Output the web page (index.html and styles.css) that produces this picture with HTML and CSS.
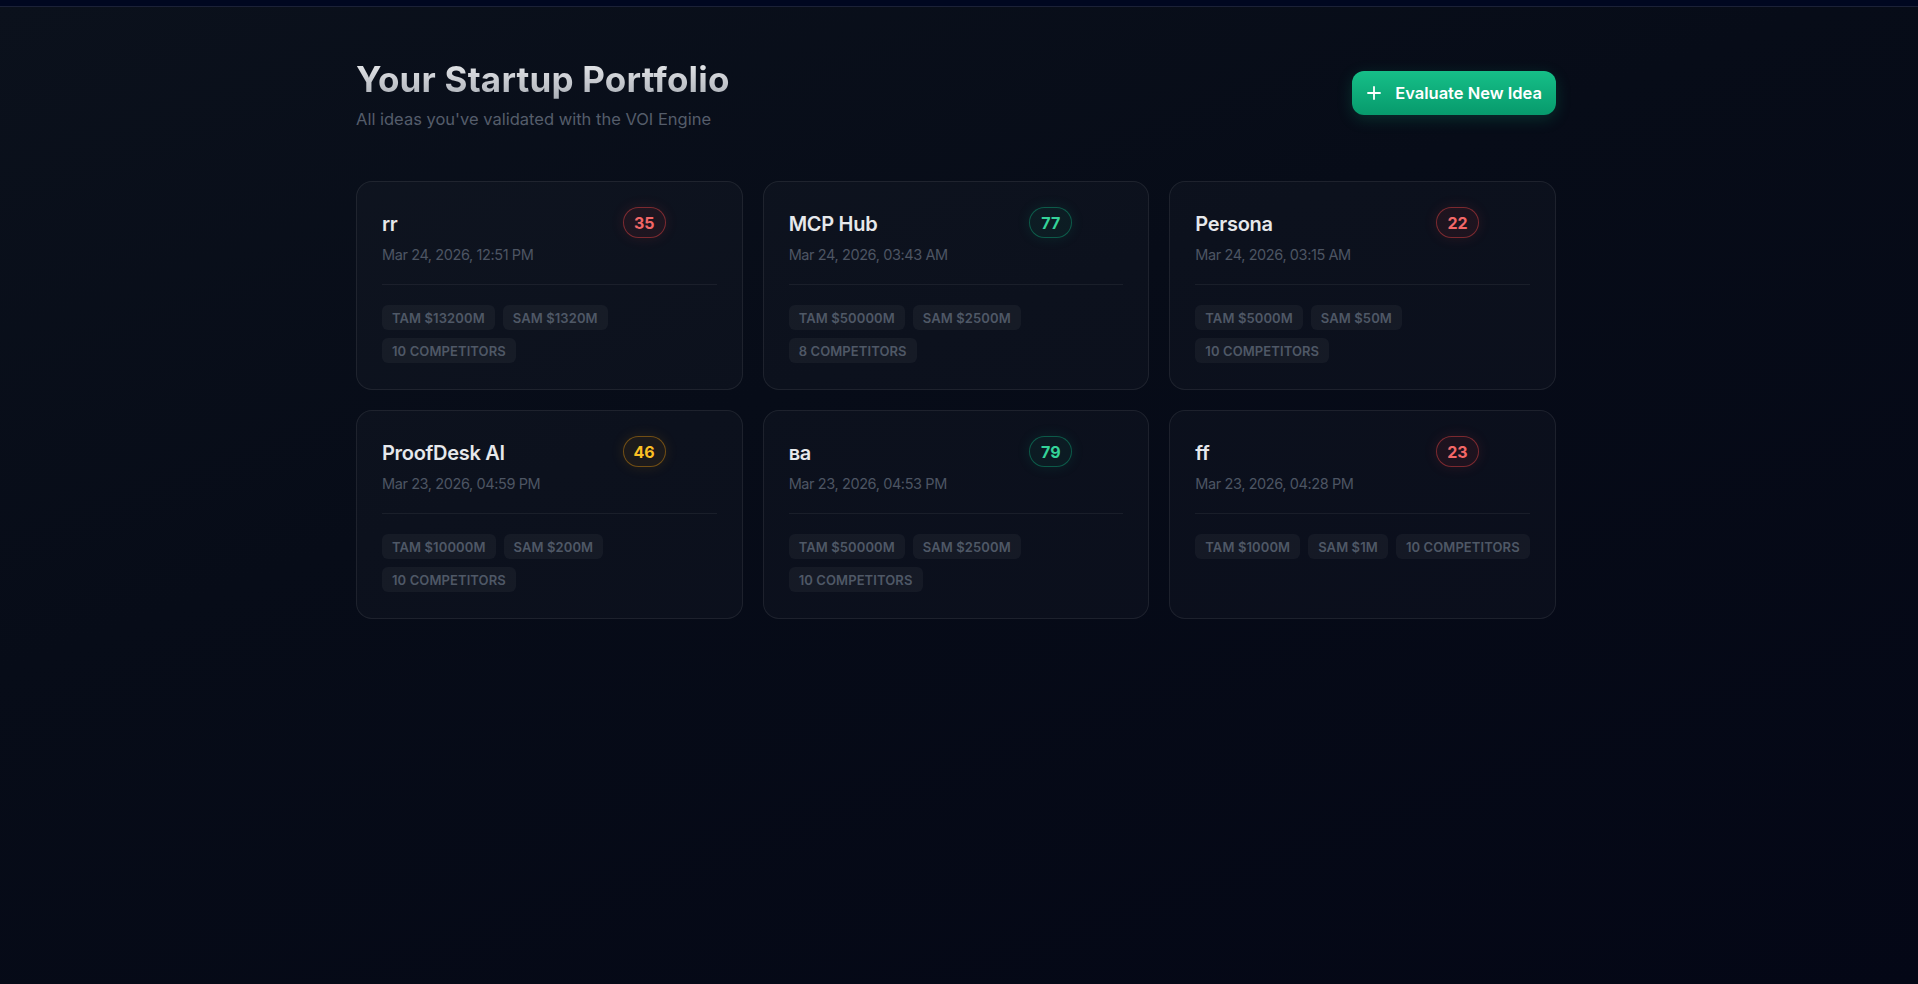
FILE: index.html
```html
<!DOCTYPE html>
<html lang="en">
<head>
    <meta charset="UTF-8">
    <meta name="viewport" content="width=device-width, initial-scale=1.0">
    <title>Portfolio</title>
    <link rel="stylesheet" href="styles.css">
</head>
<body>
    <div class="topbar"></div>
    <main class="page">
        <div class="container">
            <div class="page-header">
                <div>
                    <h1>Your Startup Portfolio</h1>
                    <p class="subtitle">All ideas you've validated with the VOI Engine</p>
                </div>
                <button class="new-button">
                    <svg width="14" height="14" viewBox="0 0 14 14" fill="none" stroke="currentColor" stroke-width="1.8" stroke-linecap="round"><path d="M7 1v12M1 7h12"/></svg>
                    Evaluate New Idea
                </button>
            </div>

            <div class="grid">
                <div class="card">
                    <div class="card-top">
                        <div>
                            <h3>rr</h3>
                            <p class="date">Mar 24, 2026, 12:51 PM</p>
                        </div>
                        <div class="card-actions">
                            <span class="score low">35</span>
                            <span class="hidden-action"></span>
                        </div>
                    </div>
                    <div class="divider"></div>
                    <div class="tags">
                        <span class="tag">TAM $13200M</span>
                        <span class="tag">SAM $1320M</span>
                        <span class="tag">10 Competitors</span>
                    </div>
                </div>

                <div class="card">
                    <div class="card-top">
                        <div>
                            <h3>MCP Hub</h3>
                            <p class="date">Mar 24, 2026, 03:43 AM</p>
                        </div>
                        <div class="card-actions">
                            <span class="score high">77</span>
                            <span class="hidden-action"></span>
                        </div>
                    </div>
                    <div class="divider"></div>
                    <div class="tags">
                        <span class="tag">TAM $50000M</span>
                        <span class="tag">SAM $2500M</span>
                        <span class="tag">8 Competitors</span>
                    </div>
                </div>

                <div class="card">
                    <div class="card-top">
                        <div>
                            <h3>Persona</h3>
                            <p class="date">Mar 24, 2026, 03:15 AM</p>
                        </div>
                        <div class="card-actions">
                            <span class="score low">22</span>
                            <span class="hidden-action"></span>
                        </div>
                    </div>
                    <div class="divider"></div>
                    <div class="tags">
                        <span class="tag">TAM $5000M</span>
                        <span class="tag">SAM $50M</span>
                        <span class="tag">10 Competitors</span>
                    </div>
                </div>

                <div class="card">
                    <div class="card-top">
                        <div>
                            <h3>ProofDesk AI</h3>
                            <p class="date">Mar 23, 2026, 04:59 PM</p>
                        </div>
                        <div class="card-actions">
                            <span class="score mid">46</span>
                            <span class="hidden-action"></span>
                        </div>
                    </div>
                    <div class="divider"></div>
                    <div class="tags">
                        <span class="tag">TAM $10000M</span>
                        <span class="tag">SAM $200M</span>
                        <span class="tag">10 Competitors</span>
                    </div>
                </div>

                <div class="card">
                    <div class="card-top">
                        <div>
                            <h3>ва</h3>
                            <p class="date">Mar 23, 2026, 04:53 PM</p>
                        </div>
                        <div class="card-actions">
                            <span class="score high">79</span>
                            <span class="hidden-action"></span>
                        </div>
                    </div>
                    <div class="divider"></div>
                    <div class="tags">
                        <span class="tag">TAM $50000M</span>
                        <span class="tag">SAM $2500M</span>
                        <span class="tag">10 Competitors</span>
                    </div>
                </div>

                <div class="card">
                    <div class="card-top">
                        <div>
                            <h3>ff</h3>
                            <p class="date">Mar 23, 2026, 04:28 PM</p>
                        </div>
                        <div class="card-actions">
                            <span class="score low">23</span>
                            <span class="hidden-action"></span>
                        </div>
                    </div>
                    <div class="divider"></div>
                    <div class="tags">
                        <span class="tag">TAM $1000M</span>
                        <span class="tag">SAM $1M</span>
                        <span class="tag">10 Competitors</span>
                    </div>
                </div>
            </div>
        </div>
    </main>
</body>
</html>
```

FILE: styles.css
```css
html, body {
    height: 100%;
}
body {
    margin: 0;
    font-family: 'Inter', 'Noto Sans', sans-serif;
    color: #e5e7eb;
    background: linear-gradient(160deg, #0b111c 0%, #070c18 40%, #040716 100%);
    display: flex;
    flex-direction: column;
    overflow: hidden;
}
.topbar {
    height: 6px;
    background-color: #000720;
    border-bottom: 1px solid #1b2137;
    flex-shrink: 0;
}
.page {
    flex: 1;
    padding: 48px 6px 0 0;
}
.container {
    max-width: 1200px;
    margin: 0 auto;
}
.page-header {
    display: flex;
    justify-content: space-between;
    align-items: center;
    margin-bottom: 50px;
}
h1 {
    margin: 0;
    font-size: 35px;
    line-height: 48px;
    font-weight: 700;
    letter-spacing: 0.2px;
    background: linear-gradient(180deg, #f1f2f4 0%, #a4a9b1 100%);
    -webkit-background-clip: text;
    background-clip: text;
    color: transparent;
}
.subtitle {
    margin: 4px 0 0;
    font-size: 16.5px;
    line-height: 24px;
    color: #555d6b;
}
.new-button {
    display: flex;
    align-items: center;
    gap: 14px;
    height: 44px;
    padding: 0 14px 0 15px;
    border: none;
    border-radius: 12px;
    background: linear-gradient(180deg, #16bf88 0%, #079a6c 100%);
    color: #fff;
    font-family: inherit;
    font-size: 16.5px;
    font-weight: 600;
    box-shadow: 0 4px 16px rgba(16, 185, 129, 0.2);
    cursor: pointer;
}
.grid {
    display: grid;
    grid-template-columns: repeat(3, 1fr);
    gap: 20px;
}
.card {
    background-color: rgba(255, 255, 255, 0.022);
    border: 1px solid rgba(255, 255, 255, 0.075);
    border-radius: 16px;
    padding: 25px 25px 24px 25px;
    height: 209px;
    box-sizing: border-box;
}
.card-top {
    display: flex;
    justify-content: space-between;
    align-items: flex-start;
}
.card h3 {
    margin: 2px 0 0;
    font-size: 20px;
    line-height: 30px;
    font-weight: 600;
    color: #e6e8eb;
    letter-spacing: -0.3px;
}
.date {
    margin: 5px 0 0;
    font-size: 14.5px;
    line-height: 22px;
    color: #4d5563;
    letter-spacing: -0.4px;
}
.card-actions {
    display: flex;
    align-items: center;
    gap: 12px;
}
.hidden-action {
    width: 39px;
    height: 31px;
}
.score {
    display: inline-flex;
    align-items: center;
    justify-content: center;
    width: 43px;
    height: 31px;
    box-sizing: border-box;
    border-radius: 16px;
    font-size: 16px;
    font-weight: 700;
    border: 1px solid;
}
.score.low {
    color: #f26767;
    border-color: rgba(239, 68, 68, 0.45);
    background-color: rgba(239, 68, 68, 0.08);
    box-shadow: 0 0 14px rgba(239, 68, 68, 0.12);
}
.score.high {
    color: #34d399;
    border-color: rgba(16, 185, 129, 0.4);
    background-color: rgba(16, 185, 129, 0.07);
    box-shadow: 0 0 14px rgba(16, 185, 129, 0.12);
}
.score.mid {
    color: #fbbf24;
    border-color: rgba(245, 158, 11, 0.4);
    background-color: rgba(245, 158, 11, 0.07);
    box-shadow: 0 0 14px rgba(245, 158, 11, 0.12);
}
.divider {
    height: 1px;
    background-color: rgba(255, 255, 255, 0.06);
    margin: 18px 0 20px;
}
.tags {
    display: flex;
    flex-wrap: wrap;
    gap: 8px;
}
.tag {
    display: inline-flex;
    align-items: center;
    height: 25px;
    padding: 0 10px;
    border-radius: 6px;
    background-color: rgba(255, 255, 255, 0.045);
    color: #4f5866;
    font-size: 13px;
    font-weight: 600;
    text-transform: uppercase;
    letter-spacing: 0.1px;
}
```
